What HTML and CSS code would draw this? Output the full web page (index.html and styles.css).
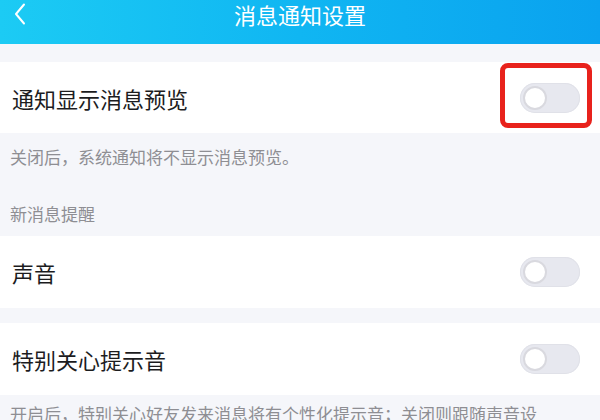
FILE: index.html
```html
<!DOCTYPE html>
<html lang="zh">
<head>
<meta charset="utf-8">
<link rel="stylesheet" href="styles.css">
</head>
<body>
<header class="topbar">
  <svg class="back" width="12" height="22" viewBox="0 0 12 22"><path d="M10 1.5 L2 11 L10 20.5" fill="none" stroke="#fff" stroke-width="2" stroke-linecap="round" stroke-linejoin="round"/></svg>
  <div class="title">消息通知设置</div>
</header>
<div class="gap-top"></div>
<div class="row row-first">
  <span class="label">通知显示消息预览</span>
  <span class="toggle"><span class="knob"></span></span>
  <div class="highlight"></div>
</div>
<div class="info">
  <p class="desc">关闭后，系统通知将不显示消息预览。</p>
  <p class="section">新消息提醒</p>
</div>
<div class="row">
  <span class="label">声音</span>
  <span class="toggle"><span class="knob"></span></span>
</div>
<div class="gap"></div>
<div class="row">
  <span class="label">特别关心提示音</span>
  <span class="toggle"><span class="knob"></span></span>
</div>
<p class="desc desc-bottom">开启后，特别关心好友发来消息将有个性化提示音；关闭则跟随声音设置。</p>
</body>
</html>
```
FILE: styles.css
```css
html, body {
  margin: 0;
  padding: 0;
}
body {
  width: 600px;
  height: 420px;
  overflow: hidden;
  background: #f5f6fa;
  font-family: "Noto Sans CJK SC", "Noto Sans", sans-serif;
}
.topbar {
  position: relative;
  height: 44px;
  background: linear-gradient(90deg, #1ccbf4 0%, #10b6f2 50%, #0aa2ef 100%);
  display: flex;
  justify-content: center;
}
.back {
  position: absolute;
  left: 14px;
  top: 3px;
}
.title {
  color: #fff;
  font-size: 22px;
  line-height: 28px;
  height: 28px;
}
.gap-top {
  height: 18px;
}
.row {
  position: relative;
  height: 72px;
  background: #fff;
  display: flex;
  align-items: center;
  justify-content: space-between;
  padding: 0 20px 0 12px;
}
.row-first {
  height: 71px;
}
.label {
  font-size: 22px;
  color: #1c1c1e;
  line-height: 30px;
}
.toggle {
  position: relative;
  width: 60px;
  height: 30px;
  border-radius: 15px;
  background: #e7e8ef;
  box-shadow: inset 0 0 0 1px #e0e1e8;
}
.knob {
  position: absolute;
  left: 3px;
  top: 3px;
  width: 20px;
  height: 20px;
  border-radius: 50%;
  background: #fff;
  border: 2px solid #d9d9df;
}
.highlight {
  position: absolute;
  left: 500px;
  top: 1px;
  width: 82px;
  height: 55px;
  border: 5px solid #e8221c;
  border-radius: 8px;
}
.info {
  height: 103px;
  padding: 0 10px;
}
.desc {
  margin: 0;
  font-size: 17px;
  line-height: 24px;
  color: #8e8e93;
}
.info .desc {
  padding-top: 12px;
}
.section {
  margin: 0;
  padding-top: 33px;
  font-size: 17px;
  line-height: 24px;
  color: #8e8e93;
}
.gap {
  height: 15px;
}
.desc-bottom {
  padding: 7px 40px 0 10px;
}
```
